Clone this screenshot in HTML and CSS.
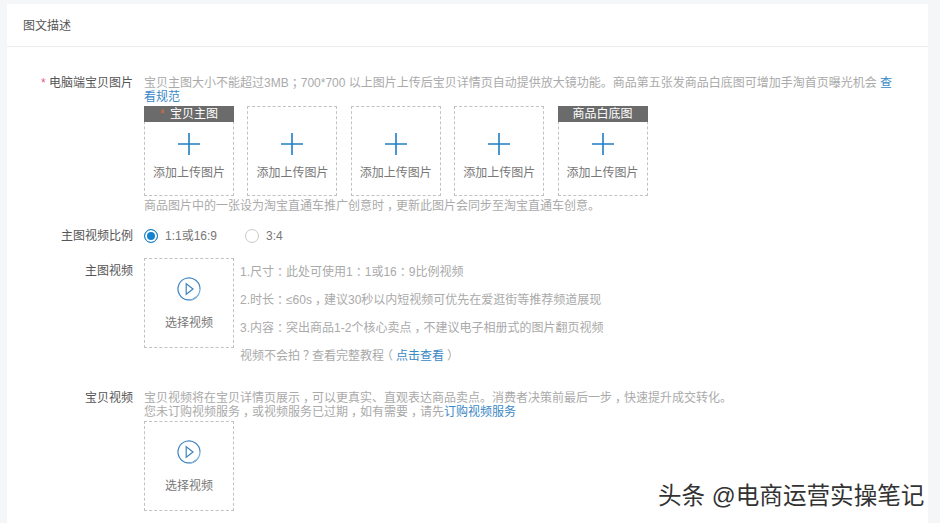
FILE: index.html
```
<!DOCTYPE html>
<html lang="zh">
<head>
<meta charset="utf-8">
<title>图文描述</title>
<link rel="stylesheet" href="styles.css">
</head>
<body>
<main class="card">
  <header class="card-head">图文描述</header>
  <div class="form">
    <section class="row row-images">
      <div class="label"><span class="req">*</span> 电脑端宝贝图片</div>
      <div class="field">
        <p class="hint">宝贝主图大小不能超过3MB<span class="pc">；</span>700*700 以上图片上传后宝贝详情页自动提供放大镜功能。商品第五张发商品白底图可增加手淘首页曝光机会 <a class="link">查看规范</a></p>
        <div class="slots">
          <div class="slot"><div class="tag"><span class="tag-star">*</span> 宝贝主图</div>
            <svg class="plus" viewBox="0 0 22 22"><path d="M0 11h22M11 0v22"/></svg><span class="slot-text">添加上传图片</span></div>
          <div class="slot"><svg class="plus" viewBox="0 0 22 22"><path d="M0 11h22M11 0v22"/></svg><span class="slot-text">添加上传图片</span></div>
          <div class="slot"><svg class="plus" viewBox="0 0 22 22"><path d="M0 11h22M11 0v22"/></svg><span class="slot-text">添加上传图片</span></div>
          <div class="slot"><svg class="plus" viewBox="0 0 22 22"><path d="M0 11h22M11 0v22"/></svg><span class="slot-text">添加上传图片</span></div>
          <div class="slot"><div class="tag">商品白底图</div>
            <svg class="plus" viewBox="0 0 22 22"><path d="M0 11h22M11 0v22"/></svg><span class="slot-text">添加上传图片</span></div>
        </div>
        <p class="hint caption">商品图片中的一张设为淘宝直通车推广创意时<span class="pc">，</span>更新此图片会同步至淘宝直通车创意。</p>
      </div>
    </section>
    <section class="row row-ratio">
      <div class="label">主图视频比例</div>
      <div class="field radios">
        <span class="radio radio-on"><i class="dot"></i>1:1或16:9</span>
        <span class="radio"><i class="dot"></i>3:4</span>
      </div>
    </section>
    <section class="row row-video">
      <div class="label">主图视频</div>
      <div class="field video-field">
        <div class="slot video-slot">
          <svg class="play" viewBox="0 0 24 24"><path d="M19.5 20A11 11 0 1 1 23 12"/><path class="play-end" d="M23 12A11 11 0 0 1 12 23"/><path d="M9.2 6.8v10.4l6.8-5.2z"/></svg>
          <span class="slot-text">选择视频</span>
        </div>
        <div class="notes">
          <p>1.尺寸<span class="pc">：</span>此处可使用1<span class="pc">：</span>1或16<span class="pc">：</span>9比例视频</p>
          <p>2.时长<span class="pc">：</span>≤60s<span class="pc">，</span>建议30秒以内短视频可优先在爱逛街等推荐频道展现</p>
          <p>3.内容<span class="pc">：</span>突出商品1-2个核心卖点<span class="pc">，</span>不建议电子相册式的图片翻页视频</p>
          <p>视频不会拍<span class="pc">？</span>查看完整教程<span class="pc">（</span><a class="link">点击查看</a><span class="pc">）</span></p>
        </div>
      </div>
    </section>
    <section class="row row-item">
      <div class="label">宝贝视频</div>
      <div class="field">
        <p class="hint">宝贝视频将在宝贝详情页展示<span class="pc">，</span>可以更真实、直观表达商品卖点。消费者决策前最后一步<span class="pc">，</span>快速提升成交转化。<br>您未订购视频服务<span class="pc">，</span>或视频服务已过期<span class="pc">，</span>如有需要<span class="pc">，</span>请先<a class="link">订购视频服务</a></p>
        <div class="slot video-slot item-slot">
          <svg class="play" viewBox="0 0 24 24"><path d="M19.5 20A11 11 0 1 1 23 12"/><path class="play-end" d="M23 12A11 11 0 0 1 12 23"/><path d="M9.2 6.8v10.4l6.8-5.2z"/></svg>
          <span class="slot-text">选择视频</span>
        </div>
      </div>
    </section>
  </div>
</main>
<div class="watermark">头条 @电商运营实操笔记</div>
</body>
</html>
```
FILE: styles.css
```
* { box-sizing: border-box; }
html, body { margin: 0; height: 100%; }
body {
  width: 940px; height: 523px; overflow: hidden; position: relative;
  background: #f5f6f8;
  padding: 4px 12px 0 7px;
  font-family: "Liberation Sans", "Noto Sans CJK SC", sans-serif;
  font-size: 12px; color: #333;
}
p { margin: 0; }
.card { background: #fff; height: 519px; }
.card-head {
  height: 43px; line-height: 41px; padding: 2px 0 0 16px;
  border-bottom: 1px solid #ececec; color: #555;
}
.form { padding-top: 29px; }
.row { display: flex; }
.label { width: 126px; flex: none; text-align: right; line-height: 14px; color: #555; }
.req { color: #e5608a; }
.field { margin-left: 11px; width: 750px; }
.hint { line-height: 14px; color: #aaa; }
.pc { font-feature-settings: "halt"; padding: 0 3px; }
.link { color: #3a88c4; }
.slots { display: flex; gap: 13.4px; margin-top: 2px; }
.slot {
  position: relative; width: 90px; height: 90px; flex: none;
  border: 1px dashed #c2c2c2;
  display: flex; flex-direction: column; align-items: center;
}
.tag {
  position: absolute; left: -1px; top: -1px; width: 90px; height: 16px;
  background: #6b6b6b; color: #fff; line-height: 16px; text-align: center;
}
.tag-star { color: #d8694a; margin-right: 2px; }
.plus { width: 22px; height: 22px; margin-top: 26px; fill: none; stroke: #1f7fc4; stroke-width: 1.6; }
.slot-text { color: #777; line-height: 16px; margin-top: 10px; }
.caption { margin-top: 3px; }
.row-ratio { margin-top: 14px; height: 18px; align-items: center; }
.row-ratio .label { line-height: 18px; }
.radios { display: flex; align-items: center; }
.radio { display: flex; align-items: center; color: #777; width: 101px; line-height: 18px; }
.dot {
  width: 14px; height: 14px; border-radius: 50%; border: 1px solid #c9c9c9;
  margin-right: 7px; background: #fff; flex: none;
}
.radio-on .dot { border-color: #1f7fc4; box-shadow: inset 0 0 0 2px #fff; background: #1482cc; }
.row-video { margin-top: 13px; }
.row-video .label { line-height: 26px; }
.video-field { display: flex; }
.video-slot .play { width: 24px; height: 24px; margin-top: 18px; fill: none; stroke: #3d84c0; stroke-width: 1.2; }
.video-slot .play-end { stroke: #7fb0d8; }
.video-slot .slot-text { margin-top: 14px; }
.notes { margin-left: 6px; color: #aaa; }
.notes p { line-height: 28px; }
.row-item { margin-top: 21px; }
.item-slot { margin-top: 2px; }
.watermark {
  position: absolute; left: 658px; top: 481px;
  font-size: 23.6px; line-height: 30px; color: #333;
  text-shadow: 1px 1px 0 #fff, -1px -1px 0 #fff;
}
```
